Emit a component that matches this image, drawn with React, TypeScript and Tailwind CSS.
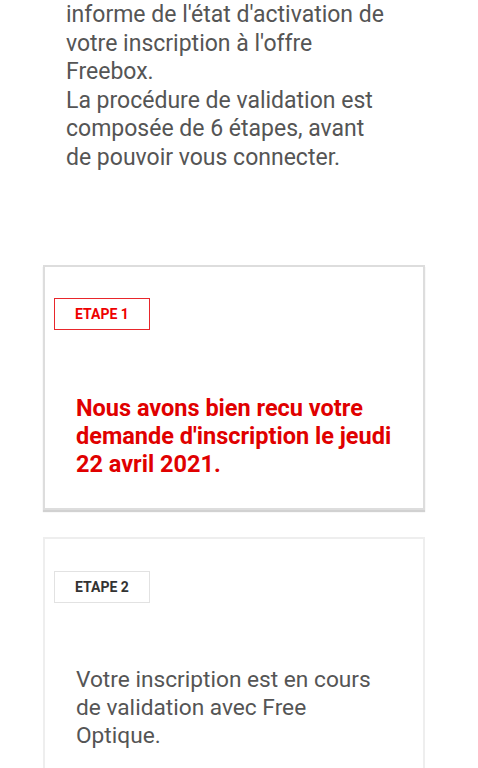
import React from "react";

const Badge = ({ label, active }: { label: string; active?: boolean }) => (
  <div
    className={
      active
        ? "w-[96px] h-[32px] flex items-center justify-center border-[1.5px] border-[#e8262b] text-[#ee0000] text-[14px] font-bold"
        : "w-[96px] h-[32px] flex items-center justify-center border-[1.5px] border-[#e2e2e2] text-[#333333] text-[14px] font-bold"
    }
  >
    {label}
  </div>
);

const App = () => {
  return (
    <div
      className="min-h-screen bg-white overflow-hidden"
      style={{ fontFamily: "Roboto, 'Noto Sans', sans-serif" }}
    >
      <div className="pl-[66px] pt-[1px] w-[392px] text-[23px] leading-[28.5px] text-[#555555]">
        informe de l'état d'activation de votre inscription à l'offre Freebox.
        <br />
        La procédure de validation est composée de 6 étapes, avant de pouvoir
        vous connecter.
      </div>

      <div className="mt-[93px] ml-[43px] w-[382px] flex flex-col gap-[27px]">
        <div className="border-2 border-[#dddddd] shadow-[0_2px_1px_rgba(0,0,0,0.18)] pt-[31px] pb-[30px] pl-[9px] pr-[28px]">
          <Badge label="ETAPE 1" active />
          <p className="mt-[64px] pl-[22px] text-[23.5px] leading-[28px] font-bold text-[#e00000]">
            Nous avons bien recu votre demande d'inscription le jeudi 22 avril
            2021.
          </p>
        </div>

        <div className="border-2 border-[#eeeeee] pt-[32px] pb-[33px] pl-[9px] pr-[28px]">
          <Badge label="ETAPE 2" />
          <p className="mt-[63px] pl-[22px] text-[22.7px] leading-[28px] text-[#555555]">
            Votre inscription est en cours de validation avec Free Optique.
          </p>
        </div>
      </div>
    </div>
  );
};

export default App;
